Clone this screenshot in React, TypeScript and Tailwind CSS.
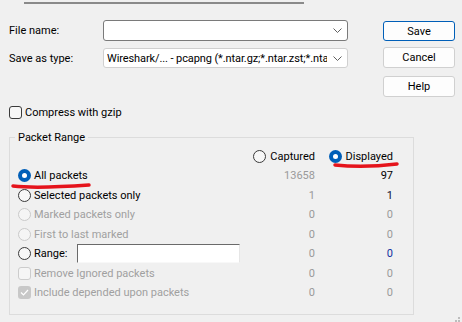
import React from 'react';

const Chevron: React.FC = () => (
  <svg width="9" height="5" viewBox="0 0 9 5" className="shrink-0">
    <path d="M0.5 0.5 L4.5 4.5 L8.5 0.5" fill="none" stroke="#606060" strokeWidth="1" />
  </svg>
);

const Radio: React.FC<{ checked?: boolean; disabled?: boolean }> = ({ checked, disabled }) => {
  if (checked) {
    return (
      <span className="w-[13px] h-[13px] rounded-full bg-[#005fb8] flex items-center justify-center shrink-0">
        <span className="w-[5px] h-[5px] rounded-full bg-white"></span>
      </span>
    );
  }
  return (
    <span
      className={`w-[13px] h-[13px] rounded-full border shrink-0 ${
        disabled ? 'border-[#cacaca] bg-[#f5f5f5]' : 'border-[#3a3a3a] bg-[#f7f7f7]'
      }`}
    ></span>
  );
};

const Check: React.FC<{ checked?: boolean; disabled?: boolean }> = ({ checked, disabled }) => {
  if (checked) {
    return (
      <span className="w-[13px] h-[13px] rounded-[3px] bg-[#c8c8c8] flex items-center justify-center shrink-0">
        <svg width="9" height="7" viewBox="0 0 9 7">
          <path d="M1 3.5 L3.5 6 L8 1" fill="none" stroke="#ffffff" strokeWidth="1.2" />
        </svg>
      </span>
    );
  }
  return (
    <span
      className={`w-[13px] h-[13px] rounded-[3px] border shrink-0 ${
        disabled ? 'border-[#cccccc] bg-[#f5f5f5]' : 'border-[#3a3a3a] bg-[#f7f7f7]'
      }`}
    ></span>
  );
};

type Row = {
  label: string;
  radio?: boolean;
  checked?: boolean;
  disabled?: boolean;
  captured: string;
  displayed: string;
  displayedColor: string;
  range?: boolean;
};

const rows: Row[] = [
  { label: 'All packets', radio: true, checked: true, captured: '13658', displayed: '97', displayedColor: 'text-black' },
  { label: 'Selected packets only', radio: true, captured: '1', displayed: '1', displayedColor: 'text-[#101030]' },
  { label: 'Marked packets only', radio: true, disabled: true, captured: '0', displayed: '0', displayedColor: 'text-[#9a9a9a]' },
  { label: 'First to last marked', radio: true, disabled: true, captured: '0', displayed: '0', displayedColor: 'text-[#9a9a9a]' },
  { label: 'Range:', radio: true, range: true, captured: '0', displayed: '0', displayedColor: 'text-[#1030a0]' },
  { label: 'Remove Ignored packets', disabled: true, captured: '0', displayed: '0', displayedColor: 'text-[#9a9a9a]' },
  { label: 'Include depended upon packets', checked: true, disabled: true, captured: '0', displayed: '0', displayedColor: 'text-[#9a9a9a]' },
];

const App: React.FC = () => {
  return (
    <div className="relative w-[462px] h-[322px] overflow-hidden bg-[#f0f0f0] text-[11px] leading-[15px] text-black font-['Roboto',sans-serif]">
      <div className="ml-[24px] mt-[2px] w-[280px] h-[2px] bg-[#8a8a8a]"></div>

      <div className="flex">
        <div className="pl-[9px] pt-[16px]">
          <div className="flex items-center h-[21px]">
            <span className="w-[94px]">File name:</span>
            <div className="w-[245px] h-[21px] rounded-[3px] border border-[#7a7a7a] bg-white flex items-center justify-end pr-[5px]">
              <Chevron />
            </div>
          </div>
          <div className="flex items-center h-[20px] mt-[7px]">
            <span className="w-[94px]">Save as type:</span>
            <div className="w-[245px] h-[20px] rounded-[3px] border border-[#d0d0d0] bg-white flex items-center pl-[3px] pr-[5px] gap-[6px]">
              <span className="flex-1 overflow-hidden whitespace-nowrap tracking-[-0.1px]">
                Wireshark/... - pcapng (*.ntar.gz;*.ntar.zst;*.ntar
              </span>
              <Chevron />
            </div>
          </div>
        </div>
        <div className="ml-[35px] pt-[17px] flex flex-col">
          <button className="w-[72px] h-[20px] rounded-[3px] border border-[#005fb8] bg-[#fdfdfd] flex items-center justify-center">
            Save
          </button>
          <button className="w-[72px] h-[21px] mt-[6px] rounded-[3px] border border-[#d0d0d0] bg-[#fdfdfd] flex items-center justify-center">
            Cancel
          </button>
          <button className="w-[72px] h-[21px] mt-[8px] rounded-[3px] border border-[#d0d0d0] bg-[#fdfdfd] flex items-center justify-center">
            Help
          </button>
        </div>
      </div>

      <div className="flex items-center gap-[3px] ml-[9px] mt-[9px] h-[13px]">
        <Check />
        <span>Compress with gzip</span>
      </div>

      <fieldset className="ml-[9px] mt-[11px] w-[405px] h-[185px] border border-[#dcdcdc]">
        <legend className="ml-[5px] px-[3px] leading-[15px]">Packet Range</legend>
        <div className="pl-[8px] mt-[1px] grid grid-cols-[232px_65px_78px] grid-rows-[20px_repeat(7,19.5px)]">
          <span></span>
          <div className="flex items-center justify-end gap-[4px]">
            <Radio />
            <span>Captured</span>
          </div>
          <div className="flex items-center justify-end gap-[4px]">
            <Radio checked />
            <span>Displayed</span>
          </div>

          {rows.map((r) => (
            <React.Fragment key={r.label}>
              <div className="flex items-center gap-[3px]">
                {r.radio ? <Radio checked={r.checked} disabled={r.disabled} /> : <Check checked={r.checked} disabled={r.disabled} />}
                <span className={r.disabled ? 'text-[#a0a0a0]' : 'text-black'}>{r.label}</span>
                {r.range && (
                  <div className="ml-[6px] w-[163px] h-[19px] bg-white border border-t-[#6a6a6a] border-l-[#6a6a6a] border-r-[#e6e6e6] border-b-[#f8f8f8]"></div>
                )}
              </div>
              <div className="flex items-center justify-end text-[#9a9a9a]">{r.captured}</div>
              <div className={`flex items-center justify-end ${r.displayedColor}`}>{r.displayed}</div>
            </React.Fragment>
          ))}
        </div>
      </fieldset>

      <svg className="absolute left-0 top-0 pointer-events-none" width="462" height="322">
        <path d="M13 186 C30 188, 60 187, 89 185" fill="none" stroke="#e5141c" strokeWidth="3.5" strokeLinecap="round" />
        <path d="M335 165 C355 167, 380 166, 397 164" fill="none" stroke="#e5141c" strokeWidth="3.5" strokeLinecap="round" />
      </svg>

      <div className="absolute left-[458px] top-[317px] w-[2px] h-[2px] bg-[#bdbdbd]"></div>
      <div className="absolute left-[455px] top-[320px] w-[2px] h-[2px] bg-[#bdbdbd]"></div>
      <div className="absolute left-[458px] top-[320px] w-[2px] h-[2px] bg-[#bdbdbd]"></div>
    </div>
  );
};

export default App;
